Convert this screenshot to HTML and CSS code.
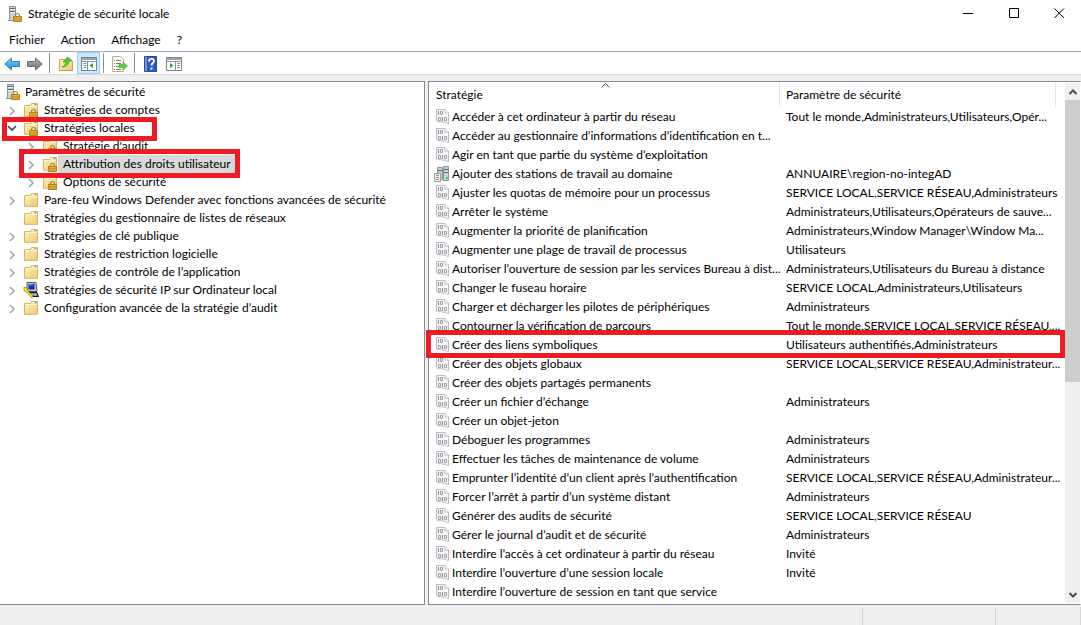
FILE: index.html
```html
<!DOCTYPE html>
<html lang="fr">
<head>
<meta charset="utf-8">
<title>Stratégie de sécurité locale</title>
<link rel="stylesheet" href="styles.css">
</head>
<body>
<svg class="sprite" aria-hidden="true">
  <defs>
    <linearGradient id="gold" x1="0" y1="0" x2="1" y2="1"><stop offset="0" stop-color="#fff0b8"/><stop offset="1" stop-color="#eecb72"/></linearGradient>
    <linearGradient id="blue" x1="0" y1="0" x2="0" y2="1"><stop offset="0" stop-color="#7fd4f8"/><stop offset="1" stop-color="#0a8fe0"/></linearGradient>
    <linearGradient id="steel" x1="0" y1="0" x2="0" y2="1"><stop offset="0" stop-color="#b5b5b5"/><stop offset="1" stop-color="#707070"/></linearGradient>
    <symbol id="i-lock" viewBox="0 0 16 16"><path d="M8.500 10.500V9.500a2 2 0 0 1 4 0v1" fill="none" stroke="#94865e" stroke-width="1.200"/><path d="M6.500 10.500h8v5h-8z" fill="#e3ae34" stroke="#b9831c"/><path d="M7 12.500h7M7 14h7" stroke="#bf881f" stroke-width=".6"/></symbol>
    <symbol id="i-folder" viewBox="0 0 16 16"><path d="M1.500 3.500h6l1-2h6v12.800h-13z" fill="url(#gold)" stroke="#d9b25c"/><path d="M9 2.500h5" stroke="#fff"/><path d="M11.500 2.500h2" stroke="#3f94df"/><path d="M2 4.500h12" stroke="#fff6d2"/></symbol>
    <symbol id="i-lockfolder" viewBox="0 0 16 16"><use href="#i-folder"/><use href="#i-lock"/></symbol>
    <symbol id="i-server" viewBox="0 0 16 16"><path d="M2.500.500h6v14h-6z" fill="#c9d0d4" stroke="#8d959a"/><path d="M3 2.500h5M3 5.500h5" stroke="#59636a"/><path d="M3 3.500h5M3 6.500h5" stroke="#f2f5f6"/><path d="M1 14.500h7" stroke="#8c9499"/><use href="#i-lock"/></symbol>
    <symbol id="i-policy" viewBox="0 0 16 16"><path d="M.500.500h8.500l3.500 3.500v10.500l-2-.500-1.500-1-2 .5-2-1.500-2 1-2.500-1z" fill="#f7f7f8" stroke="#bcbcc0"/><path d="M9 .500v3.500h3.500" fill="#fff" stroke="#bcbcc0"/><path d="M2.500 2v4M6.500 8v4" stroke="#8f8a97"/><path d="M4.500 2.500h2v3h-2zM2.500 8.500h2v3h-2zM8.500 8.500h2v3h-2z" fill="none" stroke="#a19ca9"/></symbol>
    <symbol id="i-domain" viewBox="0 0 16 16"><path d="M1.500 1.500h5v12h-5zM7.500.500h5v14h-5z" fill="#c8d1d5" stroke="#8a959b"/><path d="M2 4.500h4M8 3.500h4M8 6.500h4" stroke="#5d6b73"/><path d="M10 11h2v2h-2z" fill="#3add30"/><path d="M-1.500 7.500h6v8h-6z" fill="#f3eedb" stroke="#a19e94"/><path d="M0 9.500h3M0 11.500h3M0 13.500h3" stroke="#8d9498"/></symbol>
    <symbol id="i-ipsec" viewBox="0 0 16 16"><path d="M4 .500h9l1 9H4z" fill="#c6c6c6" stroke="#555"/><path d="M5.500 2h6v5.500h-6z" fill="#1330b0"/><path d="M6 3h4" stroke="#42bdf4"/><path d="M6 10.500h8l1.500 4H8z" fill="#999" stroke="#111"/><path d="M1 5l3 1 1 3 5 5-1 2-6-6-2-1z" fill="#f7e51c" stroke="#87780c" stroke-width=".6"/></symbol>
    <symbol id="i-closed" viewBox="0 0 8 10"><path d="M2 2l4 4-4 4" fill="none" stroke="#a6a6a6" stroke-width="1.600"/></symbol>
    <symbol id="i-open" viewBox="0 0 8 10"><path d="M0 3l4 4 4-4" fill="none" stroke="#404040" stroke-width="1.600"/></symbol>
  </defs>
</svg>
<div class="window">
  <header class="titlebar">
    <svg class="icon"><use href="#i-server"/></svg>
    <h1 class="title">Stratégie de sécurité locale</h1>
    <div class="captions">
      <button class="caption" aria-label="Réduire"><svg viewBox="0 0 11 11"><path d="M0 5.500h10" stroke="#000"/></svg></button>
      <button class="caption" aria-label="Agrandir"><svg viewBox="0 0 11 11"><path d="M.500.500h9v9h-9z" fill="none" stroke="#000"/></svg></button>
      <button class="caption" aria-label="Fermer"><svg viewBox="0 0 11 11"><path d="M.500.500l9.500 9.500M10 .500l-9.500 9.500" stroke="#000"/></svg></button>
    </div>
  </header>
  <nav class="menubar">
    <button class="menu">Fichier</button><button class="menu">Action</button><button class="menu">Affichage</button><button class="menu">?</button>
  </nav>
  <div class="toolbar">
    <button class="tool" aria-label="Précédent"><svg class="icon" viewBox="0 0 16 16"><path d="M.700 8l6.800-6v3.500h8v5h-8V14z" fill="url(#blue)" stroke="#3a84ba"/></svg></button>
    <button class="tool" aria-label="Suivant"><svg class="icon" viewBox="0 0 16 16"><path d="M15.300 8L8.500 2v3.500h-8v5h8V14z" fill="url(#steel)" stroke="#707070"/></svg></button>
    <span class="divider"></span>
    <button class="tool" aria-label="Dossier parent"><svg class="icon" viewBox="0 0 16 16"><path d="M1.500 3.500h5l1 1.500h7v9.500h-13z" fill="url(#gold)" stroke="#c9a253"/><path d="M4 11c3-1 3.500-3 3.500-5H5L9.500 1 14 4.500h-3c0 4-2.500 6.500-7 6.500z" fill="#51c637" stroke="#38a32b" stroke-width=".7"/></svg></button>
    <button class="tool tool--on" aria-label="Afficher l’arborescence"><svg class="icon" viewBox="0 0 16 16"><path d="M.500 1.500h15v13H.500z" fill="#fff" stroke="#7b838e"/><path d="M1 3h14" stroke="#9aa2ae" stroke-width="2"/><path d="M1 5.500h14M6.500 6v8M2.500 7.500h3M2.500 9.500h3M2.500 11.500h3" stroke="#8a93a0"/><path d="M12 7v5L8.500 9.500z" fill="#26a826"/></svg></button>
    <span class="divider"></span>
    <button class="tool" aria-label="Exporter la liste"><svg class="icon" viewBox="0 0 16 16"><path d="M.500.500h8l3 3v12H.500z" fill="#fffdf0" stroke="#b5b09d"/><path d="M2 4.500h1M4 4.500h5M2 7.500h1M4 7.500h5M2 10.500h1M4 10.500h3M2 13.500h1M4 13.500h5" stroke="#777b91"/><path d="M7 8.500h4V6l4.500 4-4.500 4v-2.500H7z" fill="#51cf3e" stroke="#4eb341" stroke-width=".7"/></svg></button>
    <span class="divider"></span>
    <button class="tool" aria-label="Aide"><svg class="icon" viewBox="0 0 16 16"><path d="M1.500.500h12v15h-12z" fill="#3159bc" stroke="#2b4a9b"/><path d="M2 1h2v14H2z" fill="#7896df"/><path d="M6 5.500c0-3.500 5-3.500 5-.500 0 2-2.500 2-2.500 4.500" fill="none" stroke="#fff" stroke-width="1.800"/><path d="M7.500 11.500h2v2h-2z" fill="#fff"/></svg></button>
    <button class="tool" aria-label="Afficher le volet Actions"><svg class="icon" viewBox="0 0 16 16"><path d="M.500 1.500h15v13H.500z" fill="#fff" stroke="#7b838e"/><path d="M1 3h14" stroke="#9aa2ae" stroke-width="2"/><path d="M1 5.500h14M9.500 6v8M11 7.500h3M11 9.500h3M11 11.500h3" stroke="#8a93a0"/><path d="M4 7v5l3.500-2.500z" fill="#26a826"/></svg></button>
  </div>
  <main class="panes">
    <nav class="pane tree" aria-label="Arborescence">
      <ul class="branch">
        <li class="node node--root"><svg class="icon"><use href="#i-server"/></svg><span class="label">Paramètres de sécurité</span></li>
        <li class="node"><svg class="twist"><use href="#i-closed"/></svg><svg class="icon"><use href="#i-lockfolder"/></svg><span class="label">Stratégies de comptes</span></li>
        <li class="node"><svg class="twist"><use href="#i-open"/></svg><svg class="icon"><use href="#i-lockfolder"/></svg><span class="label">Stratégies locales</span><i class="mark mark--parent"></i></li>
        <li class="node node--sub"><svg class="twist"><use href="#i-closed"/></svg><svg class="icon"><use href="#i-lockfolder"/></svg><span class="label">Stratégie d'audit</span></li>
        <li class="node node--sub"><svg class="twist"><use href="#i-closed"/></svg><svg class="icon"><use href="#i-lockfolder"/></svg><span class="label label--on">Attribution des droits utilisateur</span><i class="mark mark--child"></i></li>
        <li class="node node--sub"><svg class="twist"><use href="#i-closed"/></svg><svg class="icon"><use href="#i-lockfolder"/></svg><span class="label">Options de sécurité</span></li>
        <li class="node"><svg class="twist"><use href="#i-closed"/></svg><svg class="icon"><use href="#i-folder"/></svg><span class="label">Pare-feu Windows Defender avec fonctions avancées de sécurité</span></li>
        <li class="node"><svg class="twist"></svg><svg class="icon"><use href="#i-folder"/></svg><span class="label">Stratégies du gestionnaire de listes de réseaux</span></li>
        <li class="node"><svg class="twist"><use href="#i-closed"/></svg><svg class="icon"><use href="#i-folder"/></svg><span class="label">Stratégies de clé publique</span></li>
        <li class="node"><svg class="twist"><use href="#i-closed"/></svg><svg class="icon"><use href="#i-folder"/></svg><span class="label">Stratégies de restriction logicielle</span></li>
        <li class="node"><svg class="twist"><use href="#i-closed"/></svg><svg class="icon"><use href="#i-folder"/></svg><span class="label">Stratégies de contrôle de l’application</span></li>
        <li class="node"><svg class="twist"><use href="#i-closed"/></svg><svg class="icon"><use href="#i-ipsec"/></svg><span class="label">Stratégies de sécurité IP sur Ordinateur local</span></li>
        <li class="node"><svg class="twist"><use href="#i-closed"/></svg><svg class="icon"><use href="#i-folder"/></svg><span class="label">Configuration avancée de la stratégie d’audit</span></li>
      </ul>
    </nav>
    <section class="pane list">
      <div class="viewport">
        <table class="policies">
          <colgroup><col class="col-name"><col class="col-value"><col></colgroup>
          <thead><tr><th>Stratégie<svg class="sort" viewBox="0 0 9 5"><path d="M.500 4.500l4-4 4 4" fill="none" stroke="#555"/></svg></th><th>Paramètre de sécurité</th><th></th></tr></thead>
          <tbody id="rows"></tbody>
        </table>
      </div>
      <div class="scrollbar">
        <button class="arrow" aria-label="Défiler vers le haut"><svg viewBox="0 0 8 6"><path d="M.500 5L4 1.500 7.500 5" fill="none" stroke="#505050" stroke-width="2"/></svg></button>
        <div class="track"><div class="thumb"></div></div>
        <button class="arrow" aria-label="Défiler vers le bas"><svg viewBox="0 0 8 6"><path d="M.500 1L4 4.500 7.500 1" fill="none" stroke="#505050" stroke-width="2"/></svg></button>
      </div>
    </section>
  </main>
  <footer class="status"><span class="status-main"></span><span class="status-a"></span><span class="status-b"></span></footer>
</div>
<script src="list.js"></script>
</body>
</html>
```
FILE: list.js
```js
const policies = [
  ["Accéder à cet ordinateur à partir du réseau", "Tout le monde,Administrateurs,Utilisateurs,Opér..."],
  ["Accéder au gestionnaire d’informations d’identification en t...", ""],
  ["Agir en tant que partie du système d’exploitation", ""],
  ["Ajouter des stations de travail au domaine", "ANNUAIRE\\region-no-integAD", "domain"],
  ["Ajuster les quotas de mémoire pour un processus", "SERVICE LOCAL,SERVICE RÉSEAU,Administrateurs"],
  ["Arrêter le système", "Administrateurs,Utilisateurs,Opérateurs de sauve..."],
  ["Augmenter la priorité de planification", "Administrateurs,Window Manager\\Window Ma..."],
  ["Augmenter une plage de travail de processus", "Utilisateurs"],
  ["Autoriser l’ouverture de session par les services Bureau à dist...", "Administrateurs,Utilisateurs du Bureau à distance"],
  ["Changer le fuseau horaire", "SERVICE LOCAL,Administrateurs,Utilisateurs"],
  ["Charger et décharger les pilotes de périphériques", "Administrateurs"],
  ["Contourner la vérification de parcours", "Tout le monde,SERVICE LOCAL,SERVICE RÉSEAU,..."],
  ["Créer des liens symboliques", "Utilisateurs authentifiés,Administrateurs", "policy", true],
  ["Créer des objets globaux", "SERVICE LOCAL,SERVICE RÉSEAU,Administrateur..."],
  ["Créer des objets partagés permanents", ""],
  ["Créer un fichier d’échange", "Administrateurs"],
  ["Créer un objet-jeton", ""],
  ["Déboguer les programmes", "Administrateurs"],
  ["Effectuer les tâches de maintenance de volume", "Administrateurs"],
  ["Emprunter l’identité d’un client après l’authentification", "SERVICE LOCAL,SERVICE RÉSEAU,Administrateur..."],
  ["Forcer l’arrêt à partir d’un système distant", "Administrateurs"],
  ["Générer des audits de sécurité", "SERVICE LOCAL,SERVICE RÉSEAU"],
  ["Gérer le journal d’audit et de sécurité", "Administrateurs"],
  ["Interdire l’accès à cet ordinateur à partir du réseau", "Invité"],
  ["Interdire l’ouverture d’une session locale", "Invité"],
  ["Interdire l’ouverture de session en tant que service", ""]
];
document.getElementById("rows").innerHTML = policies.map(([name, value, icon = "policy", marked]) =>
  `<tr${marked ? ' class="marked"' : ""}><td><span class="entry"><svg class="icon"><use href="#i-${icon}"/></svg>${name}</span></td><td>${value}</td><td></td></tr>`
).join("");
```
FILE: styles.css
```css
* { box-sizing: border-box; }
body { margin: 0; font: 12px/18px Lato, "Noto Sans", sans-serif; color: #000; background: #f0f0f0; }
button { border: 0; padding: 0; background: none; font: inherit; color: inherit; }
symbol { overflow: visible; }
.sprite { position: absolute; width: 0; height: 0; }
.icon { width: 16px; height: 16px; flex: none; display: block; overflow: visible; }
.window { height: 100vh; display: flex; flex-direction: column; overflow: hidden; }

.titlebar { height: 28px; flex: none; display: flex; align-items: center; padding-left: 7px; background: #fff; }
.title { margin: 0 0 0 5px; font-size: 12px; font-weight: 400; flex: 1; }
.captions { display: flex; }
.caption { width: 46px; height: 28px; padding-bottom: 1px; display: grid; place-items: center; }
.caption:last-child { width: 44px; }
.caption svg { width: 11px; height: 11px; }
.menubar { height: 24px; flex: none; display: flex; gap: 16px; padding: 0 9px; background: #fff; border-bottom: 1px solid #acacb4; }
.toolbar { height: 23px; flex: none; display: flex; align-items: center; background: #fff; border-bottom: 1px solid #d9d9d9; }
.tool { width: 23px; height: 22px; display: grid; place-items: center; padding-top: 2px; }
.tool--on { background: #cce8ff; border: 1px solid #99d1ff; }
.divider { width: 1px; height: 20px; margin: 0 4px 0 3px; background: #8d8d8d; }

.panes { flex: 1; min-height: 0; display: grid; grid-template-columns: 425fr 653fr; gap: 3px; padding-top: 6px; }
.pane { min-width: 0; min-height: 0; background: #fff; border: 1px solid #828790; }
.tree { border-left: 0; overflow: hidden; }
.branch { list-style: none; margin: 0; padding: 1px 0 0; }
.node { position: relative; height: 18px; display: flex; align-items: center; padding-left: 8px; white-space: nowrap; }
.node--root { padding-left: 5px; }
.node--sub { padding-left: 27px; }
.twist { width: 8px; height: 10px; margin-right: 7px; flex: none; overflow: visible; }
.label { padding: 0 4px 0 5px; }
.node--root .label { padding-left: 4px; }
.label--on { background: #d9d9d9; }
.mark { position: absolute; z-index: 2; border: 5px solid #ed1c24; }
.mark--parent { left: 2px; top: -2px; width: 155px; height: 24px; }
.mark--child { left: 19px; top: -6px; width: 221px; height: 29px; }

.list { display: flex; border-right-color: #fff; }
.viewport { flex: 1; min-width: 0; }
.policies { width: 100%; table-layout: fixed; border-collapse: separate; border-spacing: 0; }
.col-name { width: 351px; }
.col-value { width: 276px; }
.policies th { height: 25px; padding: 1px 6px 0; text-align: left; font-weight: 400; border-right: 1px solid #e5e5e5; position: relative; }
.policies th:first-child { padding-left: 7px; }
.policies th:last-child { border-right: 0; }
.sort { position: absolute; width: 9px; height: 5px; left: 50%; margin-left: -3px; top: 1px; }
.policies td { height: 19px; padding: 0 0 0 6px; white-space: nowrap; }
.policies td:first-child { padding-left: 7px; }
.entry { display: flex; align-items: center; }
.marked { position: relative; }
.marked::after { content: ""; position: absolute; z-index: 2; left: -3px; right: 0; top: -5px; bottom: -4px; border: 5px solid #ed1c24; }
.scrollbar { width: 15px; flex: none; display: flex; flex-direction: column; padding: 1px 0; }
.arrow { height: 17px; flex: none; display: grid; place-items: center; background: #f0f0f0; }
.arrow svg { width: 8px; height: 6px; }
.track { flex: 1; background: #f0f0f0; }
.thumb { height: 58%; background: #cdcdcd; }

.status { height: 20px; flex: none; display: flex; padding-top: 2px; }
.status span { border-right: 1px solid #d7d7d7; }
.status-main { flex: 1; }
.status-a { width: 133px; }
.status-b { width: 85px; }
```
